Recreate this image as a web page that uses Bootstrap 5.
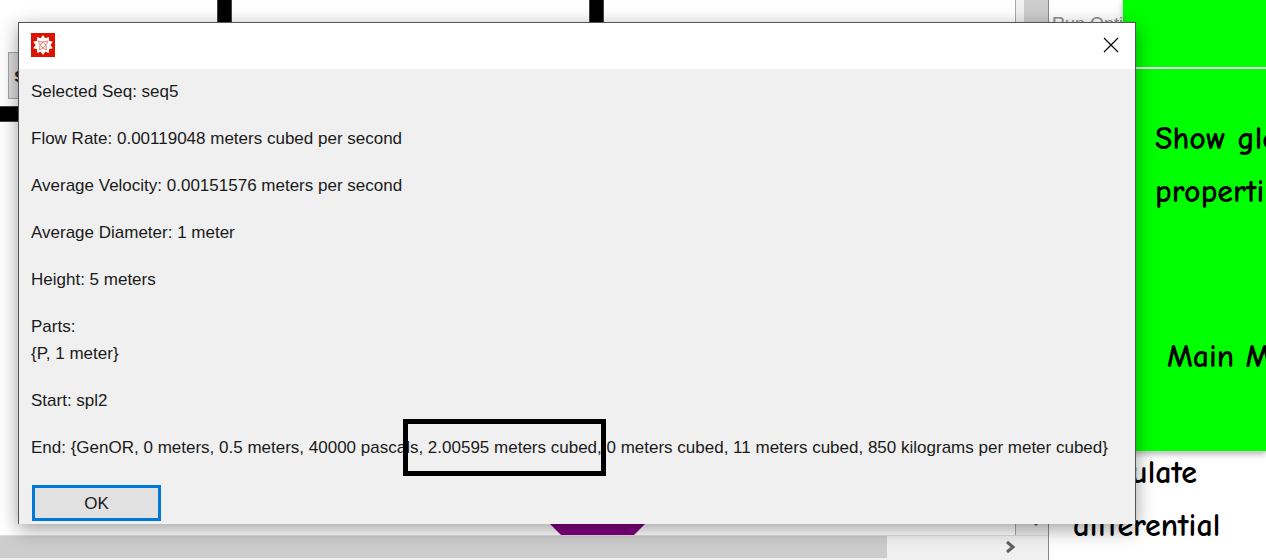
<!DOCTYPE html>
<html lang="en">
<head>
<meta charset="utf-8">
<meta name="viewport" content="width=device-width, initial-scale=1">
<title>Sequence details</title>
<link href="https://cdn.jsdelivr.net/npm/bootstrap@5.3.0/dist/css/bootstrap.min.css" rel="stylesheet">
<style>
  body { font-family: "Liberation Sans", sans-serif; font-size: 17px; line-height: 27px; color: #1a1a1a; background: #fff; }
  .desktop { height: 100vh; min-height: 540px; }

  /* drawing window behind the dialog */
  .draw-window { background: #f0f0f0; border-right: 1px solid #8a8a8a; min-width: 0; }
  .sketch { background: #fff; border-right: 1px solid #a8a8a8; margin-right: 8px; }
  .pipe, .tank { position: absolute; }
  .pipe { background: #000; border: 1px solid #444; }
  .pipe-a { left: 217px; top: -4px; width: 15px; height: 80px; }
  .pipe-b { left: 589px; top: -4px; width: 15px; height: 80px; }
  .pipe-c { left: -4px; top: 106px; width: 80px; height: 16px; }
  .tank { left: 550px; bottom: 0; }
  .seq-btn { position: absolute; left: 8px; top: 52px; width: 60px; height: 47px; padding: 0 5px; background: #dcdcdc; border: 1px solid #a6a6a6; color: #321; font-weight: 700; font-size: 20px; text-align: left; }
  .vbar { width: 24px; background: #cdcdcd; }
  .hbar { height: 25px; border-top: 1px solid #dcdcdc; }
  .hthumb { width: 887px; height: 22px; background: #cdcdcd; }
  .vend { height: 30px; background: #f0f0f0; }

  /* options window */
  .options { width: 217px; font-family: "Comic Sans MS", "Comic Neue", "Open Sans", sans-serif; font-size: 32px; font-weight: 700; line-height: 53px; color: #000; white-space: nowrap; }
  .run-label { font-family: "Liberation Sans", sans-serif; font-size: 18px; font-weight: 400; line-height: 26px; color: #8c8c8c; top: 11px; left: 3px; }
  .green-stack { margin-left: 74px; height: 452px; background: #eee; border-bottom: 1px solid #ccc; box-shadow: 0 2px 6px rgba(0,0,0,.3); }
  .green { background: #0f0; white-space: nowrap; }
  .green-top { height: 67px; }
  .green-menu { margin-top: 2px; padding: 43px 0 0 32px; }
  .main-item { padding: 112px 0 0 12px; }
  .below-text { padding: 0 0 0 24px; margin-top: -6px; }

  /* message dialog */
  .message { position: absolute; top: 22px; left: 18px; right: 130px; background: #f0f0f0; border: 1px solid #555; border-bottom: 0; box-shadow: 0 5px 18px rgba(0,0,0,.38); }
  .titlebar { height: 46px; background: #fff; padding: 0 16px 2px 12px; }
  .plain { border: 0; background: none; padding: 0; line-height: 0; }
  .message-body { padding: 9px 0 3px 12px; white-space: nowrap; }
  .facts { gap: 20px; }
  .ok { width: 129px; height: 36px; margin: 24px 0 0 1px; padding: 0; background: #e1e1e1; border: 3px solid #0078d7; color: #1a1a1a; font-size: 17px; }
  .mark-box { position: absolute; left: 372px; top: -15px; width: 203px; height: 57px; border: 5px solid #000; }
</style>
</head>
<body class="m-0 overflow-hidden">
<main class="desktop d-flex position-relative overflow-hidden">
  <section class="draw-window flex-grow-1 d-flex flex-column">
    <div class="d-flex flex-grow-1">
      <div class="sketch flex-grow-1 position-relative overflow-hidden">
        <div class="pipe pipe-a"></div>
        <div class="pipe pipe-b"></div>
        <div class="pipe pipe-c"></div>
        <button class="seq-btn" type="button">s</button>
        <svg class="tank" width="95" height="40" viewBox="0 0 95 40" aria-hidden="true"><path d="M0 0V29L11 40H84L95 29V0Z" fill="#800080"/></svg>
      </div>
      <div class="vbar d-flex align-items-end">
        <div class="vend w-100">
          <svg class="d-block mx-auto" width="12" height="24" aria-hidden="true"><path d="M1 14L6 19L11 14" fill="none" stroke="#606060" stroke-width="3"/></svg>
        </div>
      </div>
    </div>
    <div class="hbar d-flex justify-content-between">
      <div class="hthumb"></div>
      <svg class="me-4" width="24" height="22" aria-hidden="true"><path d="M7 6L13 11L7 16" fill="none" stroke="#606060" stroke-width="3"/></svg>
    </div>
  </section>

  <aside class="options flex-shrink-0 position-relative overflow-hidden">
    <span class="run-label position-absolute">Run Opti</span>
    <div class="green-stack position-relative d-flex flex-column">
      <div class="green green-top"></div>
      <div class="green green-menu flex-grow-1">
        <div>Show glo<br>properti</div>
        <div class="main-item">Main M</div>
      </div>
    </div>
    <div class="below-text">Calculate<br>differential</div>
  </aside>

  <div class="message" role="dialog" aria-label="Selected sequence">
    <div class="titlebar d-flex align-items-center justify-content-between">
      <svg width="24" height="24" viewBox="0 0 24 24" aria-hidden="true">
        <rect width="24" height="24" fill="#dd1100"/>
        <path fill="#fff" d="M12 2L14.3 5.2L17.9 3.9L18 7.8L21.8 8.8L19.5 12L21.8 15.2L18 16.2L17.9 20.1L14.3 18.8L12 22L9.7 18.8L6.1 20.1L6 16.2L2.2 15.2L4.5 12L2.2 8.8L6 7.8L6.1 3.9L9.7 5.2Z"/>
        <path fill="none" stroke="#ee8275" stroke-width="1" d="M7 8L12 9L17 8L15 12L15.500 17L12 15L8.500 17L9 12ZM9 12L12 9L15 12L12 15Z"/>
      </svg>
      <button class="plain" type="button" aria-label="Close">
        <svg width="16" height="16" aria-hidden="true"><path d="M1 1L15 15M15 1L1 15" stroke="#000" stroke-width="1.200"/></svg>
      </button>
    </div>
    <div class="message-body">
      <div class="facts d-flex flex-column">
        <div>Selected Seq: seq5</div>
        <div>Flow Rate: 0.00119048 meters cubed per second</div>
        <div>Average Velocity: 0.00151576 meters per second</div>
        <div>Average Diameter: 1 meter</div>
        <div>Height: 5 meters</div>
        <div>Parts:<br>{P, 1 meter}</div>
        <div>Start: spl2</div>
        <div class="position-relative">End: {GenOR, 0 meters, 0.5 meters, 40000 pascals, 2.00595 meters cubed, 0 meters cubed, 11 meters cubed, 850 kilograms per meter cubed}<span class="mark-box"></span></div>
      </div>
      <button class="ok" type="button">OK</button>
    </div>
  </div>
</main>
<script src="https://cdn.jsdelivr.net/npm/bootstrap@5.3.0/dist/js/bootstrap.bundle.min.js"></script>
</body>
</html>
